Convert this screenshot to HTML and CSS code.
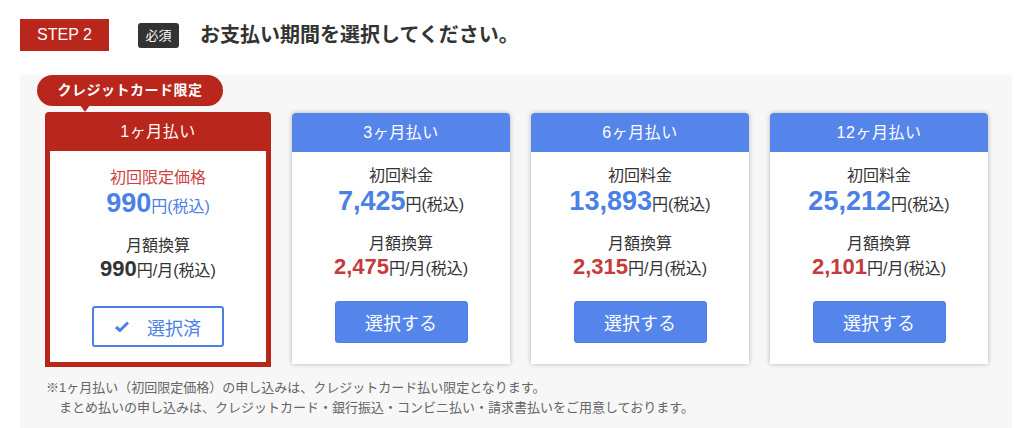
FILE: index.html
```html
<!DOCTYPE html>
<html lang="ja">
<head>
    <meta charset="UTF-8">
    <meta name="viewport" content="width=device-width, initial-scale=1.0">
    <title>お支払い期間の選択</title>
    <link rel="stylesheet" href="styles.css">
</head>
<body>
    <div class="step-head">
        <span class="step-no">STEP 2</span>
        <span class="required">必須</span>
        <h2 class="step-title">お支払い期間を選択してください。</h2>
    </div>

    <div class="plan-area">
        <div class="card-tag">クレジットカード限定</div>

        <div class="plans">
            <div class="plan plan-selected">
                <div class="plan-head">1ヶ月払い</div>
                <div class="plan-body">
                    <p class="label label-red">初回限定価格</p>
                    <p class="price price-blue"><b>990</b>円(税込)</p>
                    <p class="label">月額換算</p>
                    <p class="monthly"><b>990</b>円/月(税込)</p>
                    <button class="btn-done" type="button">
                        <svg width="14" height="11" viewBox="0 0 14 11"><path d="M1 6 L5 9.5 L13 1.5" fill="none" stroke="#4d80e4" stroke-width="3" stroke-linejoin="round"/></svg>
                        選択済
                    </button>
                </div>
            </div>

            <div class="plan">
                <div class="plan-head">3ヶ月払い</div>
                <div class="plan-body">
                    <p class="label">初回料金</p>
                    <p class="price"><b>7,425</b>円(税込)</p>
                    <p class="label">月額換算</p>
                    <p class="monthly"><b>2,475</b>円/月(税込)</p>
                    <button class="btn-select" type="button">選択する</button>
                </div>
            </div>

            <div class="plan">
                <div class="plan-head">6ヶ月払い</div>
                <div class="plan-body">
                    <p class="label">初回料金</p>
                    <p class="price"><b>13,893</b>円(税込)</p>
                    <p class="label">月額換算</p>
                    <p class="monthly"><b>2,315</b>円/月(税込)</p>
                    <button class="btn-select" type="button">選択する</button>
                </div>
            </div>

            <div class="plan">
                <div class="plan-head">12ヶ月払い</div>
                <div class="plan-body">
                    <p class="label">初回料金</p>
                    <p class="price"><b>25,212</b>円(税込)</p>
                    <p class="label">月額換算</p>
                    <p class="monthly"><b>2,101</b>円/月(税込)</p>
                    <button class="btn-select" type="button">選択する</button>
                </div>
            </div>
        </div>

        <p class="notes">※1ヶ月払い（初回限定価格）の申し込みは、クレジットカード払い限定となります。<br>まとめ払いの申し込みは、クレジットカード・銀行振込・コンビニ払い・請求書払いをご用意しております。</p>
    </div>
</body>
</html>
```

FILE: styles.css
```css
body {
    margin: 0;
    font-family: "Liberation Sans", "Noto Sans CJK JP", sans-serif;
    color: #333;
    background-color: #fff;
}
p {
    margin: 0;
}
.step-head {
    display: flex;
    align-items: center;
    margin: 19px 0 0 20px;
    height: 32px;
}
.step-no {
    width: 89px;
    height: 32px;
    line-height: 32px;
    background-color: #b9261b;
    color: #fff;
    font-size: 16px;
    text-align: center;
}
.required {
    margin-left: 29px;
    width: 41px;
    height: 25px;
    line-height: 25px;
    border-radius: 3px;
    background-color: #333;
    color: #fff;
    font-size: 13px;
    text-align: center;
}
.step-title {
    margin: 0 0 0 21px;
    font-size: 20px;
    font-weight: bold;
    color: #333;
    line-height: 32px;
}
.plan-area {
    margin: 24px 12px 0 20px;
    background-color: #f7f7f7;
    padding-bottom: 20px;
}
.card-tag {
    position: relative;
    display: inline-block;
    margin-left: 17px;
    width: 186px;
    height: 31px;
    line-height: 31px;
    border-radius: 16px;
    background-color: #b9261b;
    color: #fff;
    font-size: 14px;
    font-weight: bold;
    text-align: center;
    letter-spacing: 0.5px;
}
.card-tag::after {
    content: "";
    position: absolute;
    left: 43px;
    bottom: -6px;
    border-left: 5px solid transparent;
    border-right: 5px solid transparent;
    border-top: 7px solid #b9261b;
}
.plans {
    display: flex;
    align-items: flex-start;
    gap: 21px;
    margin: 6px 0 0 25px;
}
.plan {
    width: 218px;
    margin-top: 1px;
    background-color: #fff;
    border-radius: 4px 4px 0 0;
    box-shadow: 0 0 5px rgba(0,0,0,0.28);
    text-align: center;
}
.plan-head {
    height: 39px;
    line-height: 39px;
    background-color: #5585ea;
    color: #fff;
    font-size: 16px;
    letter-spacing: 0.5px;
    border-radius: 4px 4px 0 0;
}
.plan-body {
    padding: 12px 0 21px;
}
.label {
    font-size: 16px;
    line-height: 24px;
}
.label-red {
    color: #c94545;
}
.price {
    font-size: 16px;
    line-height: 34px;
    margin-bottom: 10px;
}
.price b {
    font-size: 27px;
    line-height: 1;
    color: #4b80e6;
}
.price-blue {
    color: #4b80e6;
}
.monthly {
    font-size: 16px;
    line-height: 26px;
}
.monthly b {
    font-size: 22px;
    line-height: 1;
    color: #c53b3b;
}
.btn-select {
    display: block;
    margin: 19px auto 0;
    width: 133px;
    height: 42px;
    border: 1px solid #4f7fe2;
    border-radius: 3px;
    background-color: #5585ea;
    color: #fff;
    font-family: inherit;
    font-size: 18px;
    cursor: pointer;
}
/* 選択中のプラン（赤枠） */
.plan-selected {
    width: 216px;
    margin-top: 0;
    padding: 0 5px 5px;
    background-color: #b9261b;
    border-radius: 4px 4px 0 0;
    box-shadow: none;
}
.plan-selected .plan-head {
    background-color: #b9261b;
}
.plan-selected .plan-body {
    background-color: #fff;
    padding: 15px 0 15px;
}
.plan-selected .monthly b {
    color: #333;
}
.btn-done {
    display: flex;
    align-items: center;
    justify-content: center;
    gap: 18px;
    margin: 22px auto 0;
    width: 132px;
    height: 41px;
    border: 2px solid #4d80e4;
    border-radius: 3px;
    background-color: #fff;
    color: #4d80e4;
    font-family: inherit;
    font-size: 18px;
}
.notes {
    margin: 11px 0 0 26px;
    padding-left: 13px;
    text-indent: -13px;
    font-size: 13px;
    line-height: 20px;
    color: #666;
}
```
